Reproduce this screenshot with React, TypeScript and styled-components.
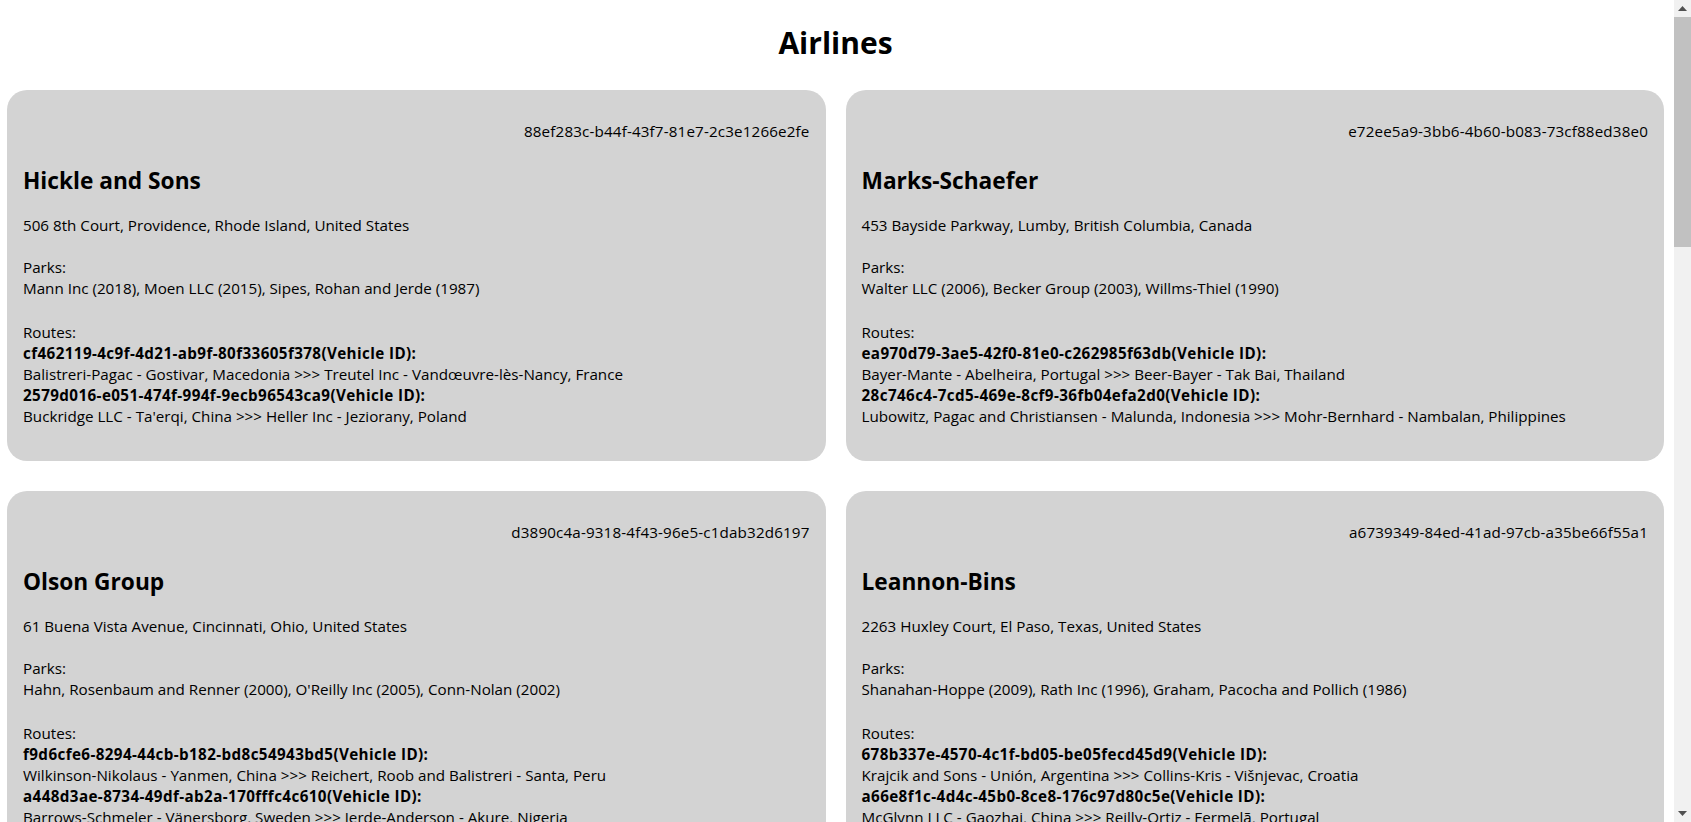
import React from "react";
import styled, { createGlobalStyle } from "styled-components";

const GlobalStyle = createGlobalStyle`
  html {
    scrollbar-width: none;
  }
  html, body {
    margin: 0;
    padding: 0;
    background: #ffffff;
  }
  body {
    font-family: "Open Sans", "Noto Sans", "Liberation Sans", sans-serif;
    color: #000000;
  }
`;

const Page = styled.main`
  padding: 0 27px 40px 7px;
`;

const Heading = styled.h1`
  margin: 23px 0 27px;
  text-align: center;
  font-size: 30px;
  line-height: 40px;
  font-weight: 700;
`;

const Grid = styled.div`
  display: grid;
  grid-template-columns: 1fr 1fr;
  column-gap: 20px;
  row-gap: 30px;
`;

const Card = styled.article`
  background: #d3d3d3;
  border-radius: 20px;
  padding: 31px 16px 34px;
  font-size: 15.2px;
  line-height: 21px;
`;

const CardId = styled.div`
  text-align: right;
  margin-bottom: 26px;
  letter-spacing: 0.15px;
`;

const Name = styled.h2`
  margin: 0 0 21px;
  font-size: 22.7px;
  line-height: 26px;
  font-weight: 700;
`;

const Address = styled.div`
  margin-bottom: 21px;
`;

const Section = styled.div<{ $gap?: number }>`
  margin-bottom: ${(p) => p.$gap ?? 0}px;
`;

const RouteId = styled.div`
  font-weight: 700;
  letter-spacing: 0.4px;
`;

const ScrollBar = styled.div`
  position: fixed;
  top: 0;
  right: 0;
  width: 17px;
  height: 100vh;
  background: #f1f1f1;
  display: flex;
  flex-direction: column;
  justify-content: space-between;
`;

const ScrollButton = styled.div`
  width: 17px;
  height: 17px;
  display: flex;
  align-items: center;
  justify-content: center;
  flex-shrink: 0;
`;

const ScrollTrack = styled.div`
  flex: 1;
  position: relative;
`;

const ScrollThumb = styled.div`
  position: absolute;
  top: 0;
  left: 0;
  right: 0;
  height: 230px;
  background: #c1c1c1;
`;

type Route = { id: string; text: string };
type Airline = {
  id: string;
  name: string;
  address: string;
  parks: string;
  routes: Route[];
};

const airlines: Airline[] = [
  {
    id: "88ef283c-b44f-43f7-81e7-2c3e1266e2fe",
    name: "Hickle and Sons",
    address: "506 8th Court, Providence, Rhode Island, United States",
    parks: "Mann Inc (2018), Moen LLC (2015), Sipes, Rohan and Jerde (1987)",
    routes: [
      {
        id: "cf462119-4c9f-4d21-ab9f-80f33605f378",
        text: "Balistreri-Pagac - Gostivar, Macedonia >>> Treutel Inc - Vandœuvre-lès-Nancy, France",
      },
      {
        id: "2579d016-e051-474f-994f-9ecb96543ca9",
        text: "Buckridge LLC - Ta'erqi, China >>> Heller Inc - Jeziorany, Poland",
      },
    ],
  },
  {
    id: "e72ee5a9-3bb6-4b60-b083-73cf88ed38e0",
    name: "Marks-Schaefer",
    address: "453 Bayside Parkway, Lumby, British Columbia, Canada",
    parks: "Walter LLC (2006), Becker Group (2003), Willms-Thiel (1990)",
    routes: [
      {
        id: "ea970d79-3ae5-42f0-81e0-c262985f63db",
        text: "Bayer-Mante - Abelheira, Portugal >>> Beer-Bayer - Tak Bai, Thailand",
      },
      {
        id: "28c746c4-7cd5-469e-8cf9-36fb04efa2d0",
        text: "Lubowitz, Pagac and Christiansen - Malunda, Indonesia >>> Mohr-Bernhard - Nambalan, Philippines",
      },
    ],
  },
  {
    id: "d3890c4a-9318-4f43-96e5-c1dab32d6197",
    name: "Olson Group",
    address: "61 Buena Vista Avenue, Cincinnati, Ohio, United States",
    parks: "Hahn, Rosenbaum and Renner (2000), O'Reilly Inc (2005), Conn-Nolan (2002)",
    routes: [
      {
        id: "f9d6cfe6-8294-44cb-b182-bd8c54943bd5",
        text: "Wilkinson-Nikolaus - Yanmen, China >>> Reichert, Roob and Balistreri - Santa, Peru",
      },
      {
        id: "a448d3ae-8734-49df-ab2a-170fffc4c610",
        text: "Barrows-Schmeler - Vänersborg, Sweden >>> Jerde-Anderson - Akure, Nigeria",
      },
    ],
  },
  {
    id: "a6739349-84ed-41ad-97cb-a35be66f55a1",
    name: "Leannon-Bins",
    address: "2263 Huxley Court, El Paso, Texas, United States",
    parks: "Shanahan-Hoppe (2009), Rath Inc (1996), Graham, Pacocha and Pollich (1986)",
    routes: [
      {
        id: "678b337e-4570-4c1f-bd05-be05fecd45d9",
        text: "Krajcik and Sons - Unión, Argentina >>> Collins-Kris - Višnjevac, Croatia",
      },
      {
        id: "a66e8f1c-4d4c-45b0-8ce8-176c97d80c5e",
        text: "McGlynn LLC - Gaozhai, China >>> Reilly-Ortiz - Fermelã, Portugal",
      },
    ],
  },
  {
    id: "5b1c2d3e-7f80-4a91-b2c3-d4e5f6a7b8c9",
    name: "Kuhn-Wolff",
    address: "12 Ridgeway Road, Tulsa, Oklahoma, United States",
    parks: "Feest Inc (2011), Kiehn LLC (1999), Ortiz-Kemmer (1994)",
    routes: [
      {
        id: "0c9d8e7f-6a5b-4c3d-9e2f-1a0b9c8d7e6f",
        text: "Hills Group - Lyon, France >>> Stark LLC - Osaka, Japan",
      },
      {
        id: "1d2e3f40-5a6b-4c7d-8e9f-0a1b2c3d4e5f",
        text: "Dare Inc - Nanjing, China >>> Koss-Lind - Porto, Portugal",
      },
    ],
  },
  {
    id: "9f8e7d6c-5b4a-4321-8fed-cba987654321",
    name: "Gerlach Group",
    address: "88 Mallard Lane, Halifax, Nova Scotia, Canada",
    parks: "Rempel Inc (2004), Bauch LLC (2013), Mraz and Sons (1991)",
    routes: [
      {
        id: "2e3f4a5b-6c7d-4e8f-9a0b-1c2d3e4f5a6b",
        text: "Lang-Hudson - Kraków, Poland >>> Bode Inc - Lima, Peru",
      },
      {
        id: "3f4a5b6c-7d8e-4f9a-0b1c-2d3e4f5a6b7c",
        text: "Yost LLC - Manila, Philippines >>> Kerluke Group - Bogotá, Colombia",
      },
    ],
  },
  {
    id: "4a5b6c7d-8e9f-4a0b-9c1d-2e3f4a5b6c7d",
    name: "Schmitt-Veum",
    address: "301 Oak Street, Boise, Idaho, United States",
    parks: "Hauck Inc (2017), Frami LLC (2001), Wiza and Sons (1988)",
    routes: [
      {
        id: "5b6c7d8e-9f0a-4b1c-8d2e-3f4a5b6c7d8e",
        text: "Cole-Ryan - Brno, Czech Republic >>> Ward Inc - Surabaya, Indonesia",
      },
      {
        id: "6c7d8e9f-0a1b-4c2d-9e3f-4a5b6c7d8e9f",
        text: "Torp LLC - Pelotas, Brazil >>> Grant Group - Daxi, China",
      },
    ],
  },
  {
    id: "7d8e9f0a-1b2c-4d3e-8f4a-5b6c7d8e9f0a",
    name: "Hermann LLC",
    address: "7 Harbor Drive, Victoria, British Columbia, Canada",
    parks: "Beier Inc (2008), Okuneva LLC (1997), Sauer-Hyatt (2012)",
    routes: [
      {
        id: "8e9f0a1b-2c3d-4e4f-9a5b-6c7d8e9f0a1b",
        text: "Runte Group - Tartu, Estonia >>> Jast Inc - Cebu, Philippines",
      },
      {
        id: "9f0a1b2c-3d4e-4f5a-8b6c-7d8e9f0a1b2c",
        text: "Kub LLC - Tomsk, Russia >>> Fay-Wehner - Arequipa, Peru",
      },
    ],
  },
  {
    id: "0a1b2c3d-4e5f-4a6b-9c7d-8e9f0a1b2c3d",
    name: "Pollich-Reichel",
    address: "940 Maple Avenue, Austin, Texas, United States",
    parks: "Lesch Inc (2003), Zieme LLC (2016), Crist Group (1993)",
    routes: [
      {
        id: "1b2c3d4e-5f6a-4b7c-8d8e-9f0a1b2c3d4e",
        text: "Howe Inc - Gdańsk, Poland >>> Upton LLC - Rosario, Argentina",
      },
      {
        id: "2c3d4e5f-6a7b-4c8d-9e9f-0a1b2c3d4e5f",
        text: "Mertz Group - Xinhe, China >>> Rau-Haag - Coimbra, Portugal",
      },
    ],
  },
  {
    id: "3d4e5f6a-7b8c-4d9e-8f0a-1b2c3d4e5f6a",
    name: "Dickens Inc",
    address: "55 Sunset Boulevard, Fresno, California, United States",
    parks: "Nader LLC (2010), Emard Inc (1995), Hessel Group (2007)",
    routes: [
      {
        id: "4e5f6a7b-8c9d-4e0f-9a1b-2c3d4e5f6a7b",
        text: "Little LLC - Bergen, Norway >>> Veum Inc - Chiang Mai, Thailand",
      },
      {
        id: "5f6a7b8c-9d0e-4f1a-8b2c-3d4e5f6a7b8c",
        text: "Wehner Group - Sumber, Indonesia >>> Batz LLC - Nice, France",
      },
    ],
  },
];

function AirlineCard({ airline }: { airline: Airline }) {
  return (
    <Card>
      <CardId>{airline.id}</CardId>
      <Name>{airline.name}</Name>
      <Address>{airline.address}</Address>
      <Section $gap={23}>
        <div>Parks:</div>
        <div>{airline.parks}</div>
      </Section>
      <Section>
        <div>Routes:</div>
        {airline.routes.map((r) => (
          <React.Fragment key={r.id}>
            <RouteId>{r.id}(Vehicle ID):</RouteId>
            <div>{r.text}</div>
          </React.Fragment>
        ))}
      </Section>
    </Card>
  );
}

function FakeScrollBar() {
  return (
    <ScrollBar aria-hidden="true">
      <ScrollButton>
        <svg width="9" height="5" viewBox="0 0 9 5">
          <path d="M0 5 L4.5 0 L9 5 Z" fill="#505050" />
        </svg>
      </ScrollButton>
      <ScrollTrack>
        <ScrollThumb />
      </ScrollTrack>
      <ScrollButton>
        <svg width="9" height="5" viewBox="0 0 9 5">
          <path d="M0 0 L4.5 5 L9 0 Z" fill="#505050" />
        </svg>
      </ScrollButton>
    </ScrollBar>
  );
}

export default function App() {
  return (
    <>
      <GlobalStyle />
      <Page>
        <Heading>Airlines</Heading>
        <Grid>
          {airlines.map((a) => (
            <AirlineCard key={a.id} airline={a} />
          ))}
        </Grid>
      </Page>
      <FakeScrollBar />
    </>
  );
}
